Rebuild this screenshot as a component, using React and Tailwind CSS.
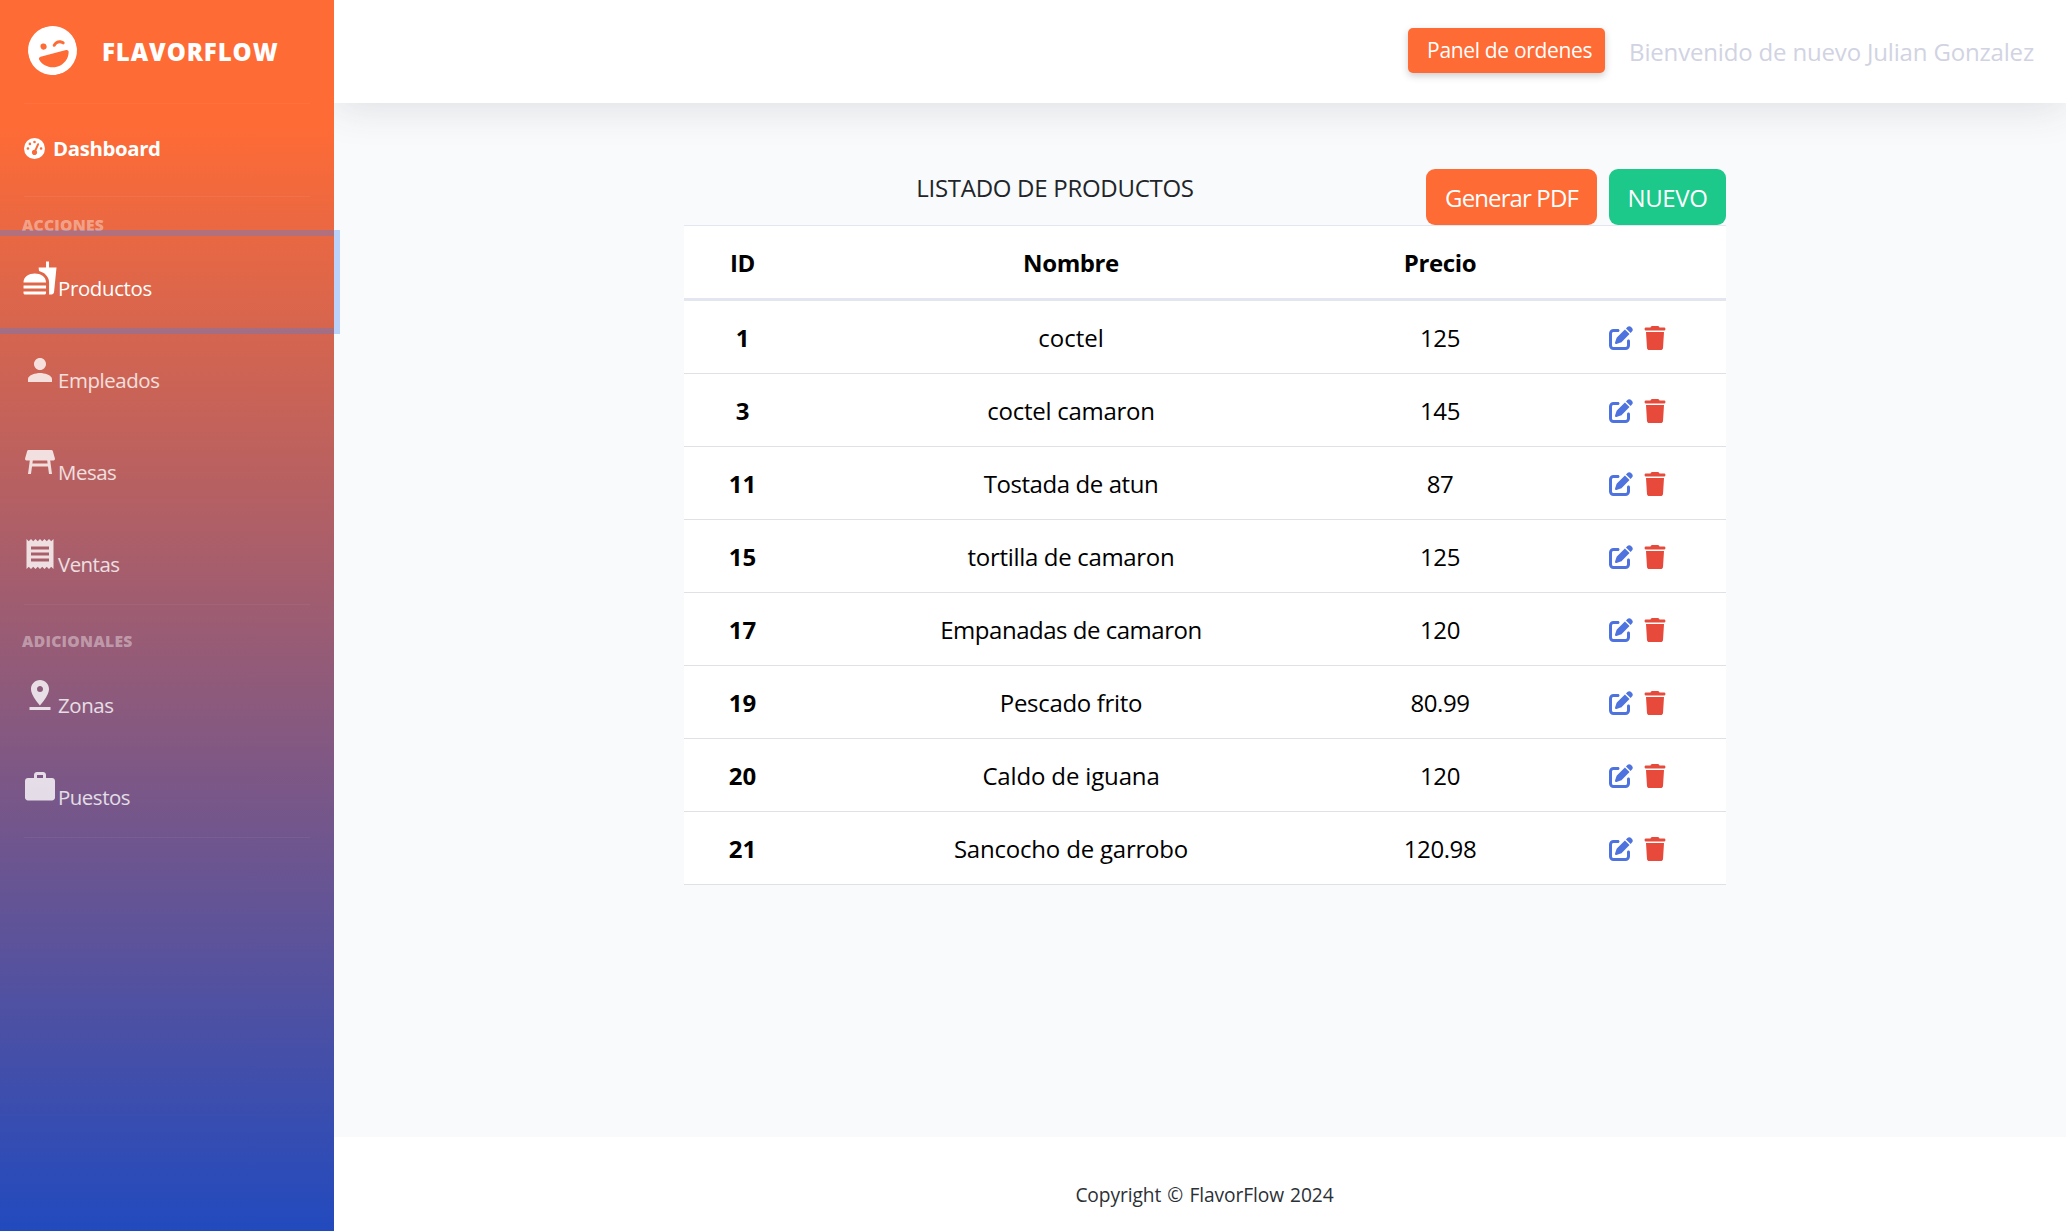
import { MdFastfood, MdPerson, MdTableRestaurant, MdReceipt, MdPinDrop, MdWork } from 'react-icons/md';
import { FaPenToSquare, FaTrash, FaGaugeHigh, FaFaceLaughWink } from 'react-icons/fa6';

const acciones = [
  { label: 'Productos', Icon: MdFastfood, active: true, track: 'tracking-[-0.34px]' },
  { label: 'Empleados', Icon: MdPerson, track: 'tracking-[-0.4px]' },
  { label: 'Mesas', Icon: MdTableRestaurant, track: 'tracking-[-0.45px]' },
  { label: 'Ventas', Icon: MdReceipt, track: 'tracking-[-0.5px]' },
];

const adicionales = [
  { label: 'Zonas', Icon: MdPinDrop, track: 'tracking-[-0.4px]' },
  { label: 'Puestos', Icon: MdWork, track: 'tracking-[-0.45px]' },
];

const productos = [
  [1, 'coctel', '125', 'tracking-normal'],
  [3, 'coctel camaron', '145', 'tracking-[-0.26px]'],
  [11, 'Tostada de atun', '87', 'tracking-[-0.42px]'],
  [15, 'tortilla de camaron', '125', 'tracking-[-0.32px]'],
  [17, 'Empanadas de camaron', '120', 'tracking-[-0.48px]'],
  [19, 'Pescado frito', '80.99', 'tracking-[-0.32px]'],
  [20, 'Caldo de iguana', '120', 'tracking-[-0.15px]'],
  [21, 'Sancocho de garrobo', '120.98', 'tracking-[-0.2px]'],
];

const columns = 'grid grid-cols-[117px_540px_198px_187px] items-center text-center';

function Divider() {
  return <hr className="mx-6 h-px border-0 bg-white/5" />;
}

function SectionTitle({ children, className }) {
  return (
    <div className={`pl-[22px] text-[15.6px] leading-[22px] font-extrabold text-white/40 ${className}`}>
      {children}
    </div>
  );
}

function NavItem({ label, Icon, active, track }) {
  return (
    <a
      className={`flex h-[92px] items-baseline pt-6 pl-[22px] text-[20.4px] leading-7 ${track} ${
        active
          ? 'relative z-10 text-white shadow-[0_0_0_6px_rgba(59,130,246,0.32)]'
          : 'text-white/80'
      }`}
    >
      <Icon className="size-9 shrink-0" />
      <span>{label}</span>
    </a>
  );
}

function Sidebar() {
  return (
    <aside className="relative z-10 w-[334px] shrink-0 bg-[linear-gradient(180deg,#ff6b35_10%,#224abe_100%)]">
      <div className="flex h-[103px] items-center pl-7 text-white">
        <FaFaceLaughWink className="mb-[3px] size-[49px] -rotate-15" />
        <span className="ml-[25px] pt-px text-2xl font-extrabold tracking-[0.92px]">FLAVORFLOW</span>
      </div>
      <Divider />
      <a className="flex h-[88px] items-center pl-6 text-white">
        <FaGaugeHigh className="size-[21px]" />
        <span className="ml-2 pt-px text-[20.4px] font-bold tracking-[-0.38px]">Dashboard</span>
      </a>
      <div className="h-[4px]" />
      <Divider />
      <div className="h-[17px]" />
      <SectionTitle className="tracking-[0.25px]">ACCIONES</SectionTitle>
      {acciones.map((item) => (
        <NavItem key={item.label} {...item} />
      ))}
      <Divider />
      <div className="h-[25px]" />
      <SectionTitle className="mb-px tracking-[0.32px]">ADICIONALES</SectionTitle>
      {adicionales.map((item) => (
        <NavItem key={item.label} {...item} />
      ))}
      <Divider />
    </aside>
  );
}

function Topbar() {
  return (
    <header className="relative flex h-[103px] shrink-0 items-center justify-end bg-white pr-8 shadow-[0_3.6px_42px_0_rgba(58,59,69,0.15)]">
      <button className="mb-[2px] flex h-[45px] w-[197px] items-center rounded-[5px] bg-[#ff6b35] pt-px pl-[19px] text-[21px] tracking-[-0.33px] whitespace-nowrap text-white shadow-[0_3px_7px_0_rgba(58,59,69,0.25)]">
        Panel de ordenes
      </button>
      <span className="ml-6 pt-px text-2xl tracking-[-0.17px] text-[#d1d3e2]">
        Bienvenido de nuevo Julian Gonzalez
      </span>
    </header>
  );
}

function ProductTable() {
  return (
    <section className="ml-[350px] w-[1042px] pt-[66px] text-2xl">
      <div className="flex h-14">
        <h1 className="w-[742px] pt-[3px] text-center tracking-[-0.28px] text-[#212529]">
          LISTADO DE PRODUCTOS
        </h1>
        <button className="h-14 w-[171px] rounded-[9px] bg-[#ff6b35] pt-[2px] tracking-[-0.88px] text-white">
          Generar PDF
        </button>
        <button className="ml-3 h-14 w-[117px] rounded-[9px] bg-[#1cc88a] pt-[2px] tracking-[-0.4px] text-white">
          NUEVO
        </button>
      </div>
      <div className="bg-white text-black">
        <div className={`${columns} h-[76px] border-t border-b-[3px] border-t-[#e3e6f0] border-b-[#e3e6f0] pt-[2px] font-bold tracking-[-0.4px]`}>
          <span>ID</span>
          <span>Nombre</span>
          <span>Precio</span>
        </div>
        {productos.map(([id, nombre, precio, track]) => (
          <div key={id} className={`${columns} h-[73px] border-b border-[#dee2e6] pt-[2px]`}>
            <span className="font-bold">{id}</span>
            <span className={track}>{nombre}</span>
            <span className="tracking-[-0.4px]">{precio}</span>
            <span className="flex gap-[10px] pl-[70px]">
              <FaPenToSquare className="size-6 text-[#4e73df]" />
              <FaTrash className="size-6 text-[#e74a3b]" />
            </span>
          </div>
        ))}
      </div>
    </section>
  );
}

export default function App() {
  return (
    <div className="flex h-[1231px] w-full bg-[#f8fafc] font-['Open_Sans','Noto_Sans',sans-serif]">
      <Sidebar />
      <div className="flex min-w-0 flex-1 flex-col overflow-hidden">
        <Topbar />
        <main className="flex-1">
          <ProductTable />
        </main>
        <footer className="h-[94px] shrink-0 bg-white pt-[44px] pl-[9px] text-center text-[19.2px] leading-7 tracking-[-0.1px] text-[#2c3136] [word-spacing:1.3px]">
          Copyright © FlavorFlow 2024
        </footer>
      </div>
    </div>
  );
}
